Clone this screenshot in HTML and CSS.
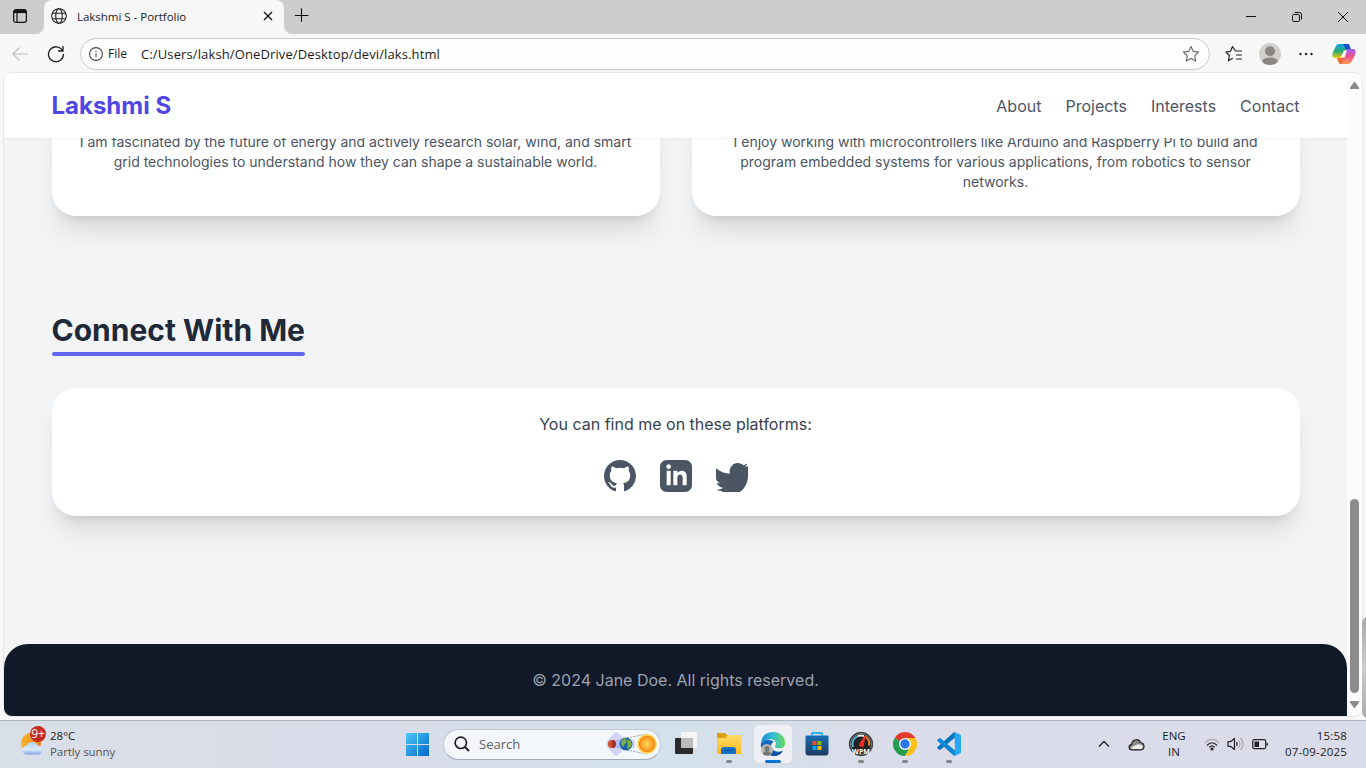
FILE: index.html
```html
<!DOCTYPE html>
<html lang="en">
<head>
<meta charset="utf-8">
<title>Lakshmi S - Portfolio</title>
<link rel="stylesheet" href="styles.css">
</head>
<body>
<div class="screen">
  <div class="tabbar">
    <div class="tab-menu"><svg width="16" height="16" viewBox="0 0 16 16" fill="none" stroke="#111" stroke-width="1.2"><rect x="1.6" y="1.6" width="12.8" height="12.8" rx="2.4"/><path d="M2 3.6h12" stroke-width="3"/><path d="M5 5v9"/></svg></div>
    <div class="tab">
      <svg class="globe" width="16" height="16" viewBox="0 0 16 16" fill="none" stroke="#222" stroke-width="1.1"><circle cx="8" cy="8" r="7.3"/><ellipse cx="8" cy="8" rx="3.3" ry="7.3"/><path d="M1.3 5.3h13.4M1.3 10.7h13.4"/></svg>
      <span class="tab-title">Lakshmi S - Portfolio</span>
      <svg class="tab-close" width="10" height="10" viewBox="0 0 10 10" stroke="#111" stroke-width="1.3"><path d="M1 1l8 8M9 1L1 9"/></svg>
    </div>
    <div class="strip"><svg class="plus" width="14" height="14" viewBox="0 0 14 14" stroke="#111" stroke-width="1.1"><path d="M6.500 .2v13.600M-.2 7.500h13.600"/></svg>
    <div class="win">
      <svg width="46" height="34" viewBox="0 0 46 34" fill="none" stroke="#111"><path d="M18 16.5h10"/></svg>
      <svg width="46" height="34" viewBox="0 0 46 34" fill="none" stroke="#111"><rect x="18.5" y="14.5" width="7" height="7" rx="1.3"/><path d="M20.5 12.5h5a2 2 0 0 1 2 2v5"/></svg>
      <svg width="46" height="34" viewBox="0 0 46 34" fill="none" stroke="#111"><path d="M18 12l10 10M28 12l-10 10"/></svg>
    </div></div>
  </div>
  <div class="toolbar">
    <svg class="back" width="16" height="14" viewBox="0 0 16 14" fill="none" stroke="#bcbcbc" stroke-width="1.1"><path d="M16 7H1M7.5.5L1 7l6.500 6.500"/></svg>
    <svg class="reload" width="18" height="18" viewBox="0 0 18 18" fill="none" stroke="#222" stroke-width="1.3"><path d="M15.500 5.500A7.500 7.500 0 1 0 16.500 9M16 1v5h-5"/></svg>
    <div class="address">
      <svg width="14" height="14" viewBox="0 0 14 14" fill="none" stroke="#444" stroke-width="1.1"><circle cx="7" cy="7" r="6.400"/><path d="M7 6.200V10M7 3.800V5"/></svg>
      <span class="scheme">File</span>
      <span class="url">C:/Users/laksh/OneDrive/Desktop/devi/laks.html</span>
      <svg class="star" width="18" height="18" viewBox="0 0 18 18" fill="none" stroke="#666" stroke-width="1.100" stroke-linejoin="round"><path d="M9 1.500l2.300 4.900 5.300.7-3.900 3.700 1 5.300L9 13.500l-4.700 2.600 1-5.300-3.900-3.700 5.300-.7z"/></svg>
    </div>
    <div class="tools">
      <svg width="18" height="18" viewBox="0 0 18 18" fill="none" stroke="#222" stroke-width="1.200" stroke-linejoin="round"><path d="M10.500 6L7.500 1.500 5.500 6.300l-4.700.7 3.600 3.500-1 5.300 4.400-2.500M10.500 6h6.500M11 10h6M11 14h6"/></svg>
      <svg width="22" height="22" viewBox="0 0 22 22"><defs><clipPath id="avatar"><circle cx="11" cy="11" r="11"/></clipPath></defs><circle cx="11" cy="11" r="11" fill="#d2d0cd"/><g fill="#8b8784" clip-path="url(#avatar)"><circle cx="11" cy="8.300" r="5"/><ellipse cx="11" cy="19" rx="8" ry="4.500"/></g></svg>
      <svg width="14" height="4" viewBox="0 0 14 4" fill="#222"><circle cx="1.500" cy="2" r="1.200"/><circle cx="7" cy="2" r="1.200"/><circle cx="12.500" cy="2" r="1.200"/></svg>
      <svg width="24" height="22" viewBox="0 0 24 22"><defs><linearGradient id="cpa" x2="0" y2="1"><stop stop-color="#169fe8"/><stop offset=".5" stop-color="#25ad78"/><stop offset="1" stop-color="#f4c80c"/></linearGradient><linearGradient id="cpb" x2="0" y2="1"><stop stop-color="#a05bf0"/><stop offset=".5" stop-color="#f15490"/><stop offset="1" stop-color="#fd9e55"/></linearGradient></defs><path d="M7 1h8c2 0 2.500 1 3 3l1 3h-5L9 15H3C0 15 0 12 1 9l3-6c.5-1.300 1.500-2 3-2z" fill="url(#cpa)"/><path d="M11 1h4c2 0 2.500 1 3 3l1 3h-4c-2 0-2-4-4-6z" fill="#174fc8"/><path d="M17 6h4c3 0 3 3 2 6l-3 6c-1 2-2 3-4 3H9c-2 0-2.500-2-3-4l-1-2h5l4-7c.6-1.300 1.600-2 3-2z" fill="url(#cpb)"/><path d="M5 15h5l3-5 1 0-3 8c-.5 2-1 3-2 3-2 0-2.500-2-3-4z" fill="#ef6941"/><path d="M12 7.500h3l-2.500 7H9z" fill="#fff"/></svg>
    </div>
  </div>
  <div class="frame">
    <div class="page">
      <nav class="nav"><strong class="brand">Lakshmi S</strong><div class="links"><span>About</span><span>Projects</span><span>Interests</span><span>Contact</span></div></nav>
      <main class="main">
        <div class="interests">
          <article class="card interest">I am fascinated by the future of energy and actively research solar, wind, and smart<br>grid technologies to understand how they can shape a sustainable world.</article>
          <article class="card interest">I enjoy working with microcontrollers like Arduino and Raspberry Pi to build and<br>program embedded systems for various applications, from robotics to sensor<br>networks.</article>
        </div>
        <h2 class="heading">Connect With Me</h2>
        <section class="card connect">
          <p class="lead">You can find me on these platforms:</p>
          <div class="social">
            <svg width="32" height="32" viewBox="0 0 24 24"><path d="M12 0C5.370 0 0 5.370 0 12c0 5.300 3.440 9.800 8.210 11.390.6.110.82-.26.82-.58v-2.230c-3.340.73-4.040-1.420-4.040-1.420-.55-1.390-1.330-1.760-1.330-1.760-1.090-.74.08-.73.08-.73 1.200.08 1.840 1.240 1.840 1.240 1.070 1.830 2.800 1.300 3.490 1 .11-.78.42-1.310.76-1.610-2.670-.3-5.470-1.330-5.470-5.930 0-1.310.47-2.380 1.240-3.220-.12-.3-.54-1.520.12-3.180 0 0 1.010-.32 3.300 1.230a11.500 11.500 0 0 1 6 0c2.290-1.550 3.300-1.230 3.300-1.230.66 1.660.24 2.880.12 3.180.77.84 1.240 1.910 1.240 3.220 0 4.610-2.810 5.620-5.480 5.920.43.37.82 1.100.82 2.220v3.290c0 .32.21.7.82.58A12 12 0 0 0 24 12C24 5.370 18.630 0 12 0z"/></svg>
            <svg width="32" height="32" viewBox="0 0 24 24"><path d="M19 0h-14c-2.761 0-5 2.239-5 5v14c0 2.761 2.239 5 5 5h14c2.762 0 5-2.239 5-5v-14c0-2.761-2.238-5-5-5zm-11 19h-3v-11h3v11zm-1.500-12.268c-.966 0-1.750-.79-1.750-1.764s.784-1.764 1.750-1.764 1.750.79 1.750 1.764-.783 1.764-1.750 1.764zm13.500 12.268h-3v-5.604c0-3.368-4-3.113-4 0v5.604h-3v-11h3v1.765c1.396-2.586 7-2.777 7 2.476v6.759z"/></svg>
            <svg width="32" height="32" viewBox="0 0 24 24"><path d="M0 6.200c3 2.700 6.600 4 10.400 4.100C9.500 5.800 12.500 2.200 16.300 2.200c1.900 0 3.200.7 4.200 1.700 1.100-.2 2.100-.6 3.100-1.200-.4 1-1.100 1.900-2 2.500l2.400-.5v8.100C23.500 18 21.500 21.500 18 24H4.300l.5-.7c-1.700.1-3.300-.2-4.800-.9 2 .1 3.800-.5 5.200-1.600-2.200-.2-3.900-1.500-4.700-3.500.8.2 1.700.1 2.500-.1C1.300 16.700 0 15.200 0 13.500z"/></svg>
          </div>
        </section>
      </main>
      <footer class="footer">© 2024 Jane Doe. All rights reserved.</footer>
    </div>
    <div class="scroll"><svg width="9" height="7" viewBox="0 0 9 7"><path d="M4 0h1l4 5.500V7H0V5.500z"/></svg><div class="thumb"></div><svg width="9" height="7" viewBox="0 0 9 7"><path d="M0 0h9v1.500L5 7H4L0 1.500z"/></svg></div>
  </div>
  <div class="edge-widget"></div>
  <div class="taskbar">
    <div class="weather">
      <svg width="26" height="32" viewBox="0 0 26 32"><defs><linearGradient id="sun"><stop stop-color="#f9b42d"/><stop offset="1" stop-color="#ef8418"/></linearGradient><linearGradient id="cloud" x2="0" y2="1"><stop stop-color="#b5d2fa"/><stop offset=".6" stop-color="#dceafa"/><stop offset="1" stop-color="#7ca5ec"/></linearGradient></defs><circle cx="11" cy="18" r="10" fill="url(#sun)"/><path d="M7 29.500a4.500 4.500 0 0 1-.3-9c1.300-4 8.300-5 11 0 6-.5 6.800 9 0 9z" fill="url(#cloud)"/><circle cx="18" cy="9" r="8" fill="#c42b1c"/><text class="badge" x="18" y="13.200" text-anchor="middle">9+</text></svg>
      <div class="weather-text"><span class="temp">28°C</span><span class="sky">Partly sunny</span></div>
    </div>
    <div class="apps">
      <svg class="start" width="23" height="23" viewBox="0 0 23 23"><defs><linearGradient id="win" x2="1" y2="1"><stop stop-color="#50c8f7"/><stop offset="1" stop-color="#0067cc"/></linearGradient></defs><path fill="url(#win)" d="M0 0h11v11H0zM12 0h11v11H12zM0 12h11v11H0zM12 12h11v11H12z"/></svg>
      <div class="search">
        <svg width="16" height="16" viewBox="0 0 16 16" fill="none" stroke="#222"><circle cx="6.800" cy="6.800" r="5.700" stroke-width="1.700"/><path d="M11 11l4 4" stroke-width="2.200"/></svg>
        <span>Search</span>
        <svg class="space" width="54" height="28" viewBox="0 0 54 28"><defs><radialGradient id="sol"><stop stop-color="#ffd25a"/><stop offset=".6" stop-color="#fda52b"/><stop offset=".75" stop-color="#f87e16"/><stop offset=".85" stop-color="#ffcf3a"/><stop offset="1" stop-color="#ffe88a"/></radialGradient></defs><path d="M1 14q0-3 3-5l5-6q2-2 4 0l7 6 10 1v8l-10 1-7 6q-2 2-4 0l-5-6q-3-2-3-5z" fill="#d3d5f4"/><path d="M7 11l15-3v12L7 17z" fill="#a4aff0" opacity=".7"/><path d="M22 8l20-4M22 20l20 4" stroke="#9ba5b5" stroke-dasharray="2 1"/><circle cx="7" cy="14" r="4" fill="#d54d2b"/><path d="M7 10a4 4 0 0 1 0 8z" fill="#a2342a"/><circle cx="21" cy="14" r="6.500" fill="#1d60ac"/><path d="M16 11l4-3 2 3-2 3-2 3-2-3zM23 9l3 2 1 4-3 4-2-2 1-3-1-2z" fill="#7bae43"/><circle cx="42" cy="14" r="10" fill="url(#sol)"/></svg>
      </div>
      <div class="app"><svg width="26" height="26" viewBox="0 0 26 26"><rect x="2" y="7" width="18" height="16" rx="1" fill="#2b2b2b"/><rect x="8" y="1" width="16" height="16" rx="1" fill="#f5f5f5"/><path d="M8 7h12v10H8z" fill="#bcbcbc"/></svg></div>
      <div class="app run"><svg width="26" height="26" viewBox="0 0 26 26"><defs><linearGradient id="folder" x2="0" y2="1"><stop stop-color="#ffdb68"/><stop offset="1" stop-color="#fbb91d"/></linearGradient></defs><path d="M1 3c0-1 .5-1 1-1h7l2 2h13c1 0 1 1 1 1v8H1z" fill="#dc9d10"/><path d="M1 7h8l3-3h12l1 1v17c0 1 0 1-1 1H1z" fill="url(#folder)"/><path d="M5 23v-4q0-3 3-3h9q3 0 3 3v4z" fill="#1473c8"/><path d="M8 19.500h9" stroke="#0a569e" stroke-width="1.500"/></svg></div>
      <div class="app active"><svg width="26" height="26" viewBox="0 0 26 26"><defs><linearGradient id="edge"><stop stop-color="#168dd8"/><stop offset=".5" stop-color="#32bed5"/><stop offset="1" stop-color="#68d855"/></linearGradient></defs><path d="M1 12C2 4 7 1 13 1c8 0 13 6 12 12-.6 4-4 5-8 4-3-.7-2-2-1-4 1-5-9-7-15-1z" fill="url(#edge)"/><path d="M1 12c4-4 9-4 13-1-4 1-4 7 1 9 4 1.500 7 0 8-.500C20 25 14 26 9 24 3 22 0 17 1 12z" fill="#136cb9"/><path d="M11 12c-2 6 4 13 12 8-5 8-15 5-16-1-.5-3 1-6 4-7z" fill="#1551a0"/><circle cx="7" cy="19" r="6" fill="#b9b8b6"/><circle cx="7" cy="17.500" r="2.600" fill="#777"/><path d="M3 23c0-4 8-4 8 0-2 2-6 2-8 0z" fill="#777"/></svg></div>
      <div class="app"><svg width="26" height="26" viewBox="0 0 26 26"><defs><linearGradient id="store" x2="0" y2="1"><stop stop-color="#176db5"/><stop offset="1" stop-color="#20395f"/></linearGradient></defs><path d="M8 6V3q0-1 1-1h8q1 0 1 1v3" fill="none" stroke="#29b1ed" stroke-width="1.800"/><path d="M1.500 5.500q0-1 1-1h21q1 0 1 1v16q0 3-3 3h-17q-3 0-3-3z" fill="url(#store)"/><path d="M8 5V3q0-1 1-1h8q1 0 1 1v2" fill="none" stroke="#29b1ed" stroke-width="1.800"/><path d="M8.500 10h4v4h-4z" fill="#f25022"/><path d="M13.500 10h4v4h-4z" fill="#7fba00"/><path d="M8.500 15h4v4h-4z" fill="#00a4ef"/><path d="M13.500 15h4v4h-4z" fill="#ffb900"/></svg></div>
      <div class="app run"><svg width="26" height="26" viewBox="0 0 26 26"><circle cx="13" cy="13" r="11.700" fill="#222" stroke="#3b3b3b"/><circle cx="13" cy="13" r="10.500" fill="none" stroke="#aaa" stroke-width=".7"/><path d="M5 16A8.500 8.500 0 0 1 10 5" fill="none" stroke="#51b2dc" stroke-width="2"/><path d="M10 5a8.500 8.500 0 0 1 6 0" fill="none" stroke="#eee" stroke-width="2"/><path d="M17 5.500a8.500 8.500 0 0 1 4 9" fill="none" stroke="#f18624" stroke-width="2"/><path d="M17 5l-2 11-4-2z" fill="#ef2c23" stroke="#ef2c23"/><text class="wpm" x="13" y="22.500" text-anchor="middle">WPM</text></svg></div>
      <div class="app run"><svg width="24" height="24" viewBox="0 0 24 24"><path d="M12 12L1.600 6A12 12 0 0 1 22.400 6z" fill="#e33b2e"/><path d="M12 12L1.600 6A12 12 0 0 0 12 24l5-9z" fill="#269d4d"/><path d="M12 6h10.400A12 12 0 0 1 12 24l5.200-9z" fill="#fbc116"/><circle cx="12" cy="12" r="6" fill="#fff"/><circle cx="12" cy="12" r="4.700" fill="#2876e8"/></svg></div>
      <div class="app run"><svg width="24" height="24" viewBox="0 0 24 24"><path d="M18 5.500L3.500 17.800l-1 .2L0 16l.5-1L16.500.5 18 0z" fill="#0875bd"/><path d="M18 18.500L3.500 6.200l-1-.2L0 8l.5 1 16 14.500L18 24z" fill="#1088d3"/><path d="M17.500 0l5.500 2.500 1 1v17l-1 1L17.500 24l-1-.5 1.500-1z" fill="#29a7f0"/></svg></div>
    </div>
    <div class="tray">
      <svg class="chev" width="12" height="8" viewBox="0 0 12 8" fill="none" stroke="#222" stroke-width="1.300"><path d="M1 6.500l5-5 5 5"/></svg>
      <svg class="onedrive" width="17" height="13" viewBox="0 0 17 13"><path d="M4 11.800C.5 11.800 0 7.300 3.500 6.300 4.500.5 11 .5 12.300 4.500 17.300 5 17 11.800 13 11.800z" fill="#888" stroke="#222" stroke-width="1.200"/><path d="M3 10.800C3.500 8 8 7.500 9.500 6.500c2-.8 5 0 5.500 3l-1.500 1.600H4z" fill="#eee"/></svg>
      <div class="lang"><span>ENG</span><span>IN</span></div>
      <svg class="wifi" width="16" height="13" viewBox="0 0 16 13" fill="none" stroke="#222" stroke-width="1.200"><path d="M1 5.200c4-5 10-5 14 0" stroke="#aaa"/><path d="M3 7.500c3-3.700 7-3.700 10 0M5.300 9.400c1.700-2 3.700-2 5.400 0"/><circle cx="8" cy="11" r="1" fill="#222"/></svg>
      <svg class="sound" width="17" height="14" viewBox="0 0 17 14" fill="none" stroke="#222" stroke-width="1.200"><path d="M1 4.700h2.500L7.500 1.500v11l-4-3.200H1z" stroke-linejoin="round"/><path d="M9.500 5q1.500 2 0 4"/><path d="M11.500 3q3 4 0 8M13.500 1q5 6 0 12" stroke="#aaa"/></svg>
      <svg class="battery" width="17" height="11" viewBox="0 0 17 11"><rect x=".7" y=".7" width="13" height="9" rx="1.800" fill="none" stroke="#222" stroke-width="1.200"/><path d="M2.500 2.500H7v5.500H2.500zM14.500 3.500l1.500 1v1.500l-1.500 1z" fill="#222"/></svg>
      <div class="clock"><span>15:58</span><span>07-09-2025</span></div>
    </div>
  </div>
</div>
</body>
</html>
```
FILE: styles.css
```css
* { box-sizing: border-box; }
body { margin: 0; overflow: hidden; }
svg { display: block; flex: none; }
.screen { position: relative; display: flex; flex-direction: column; width: 1366px; height: 768px; overflow: hidden; background: #f7f7f7; font-family: "Open Sans", "Noto Sans", sans-serif; color: #1b1b1b; white-space: nowrap; }

.tabbar { display: flex; height: 34px; background: #f7f7f7; }
.tab-menu { width: 44px; padding: 8px 0 0 12px; border-bottom-right-radius: 8px; background: #cdcdcd; }
.tab { display: flex; align-items: center; width: 240px; padding: 0 11px 2px 7px; border-radius: 8px 8px 0 0; background: #f7f7f7; box-shadow: 0 -8px 0 #cdcdcd; }
.tab { box-shadow: -4px -8px 0 4px #cdcdcd, 4px -8px 0 4px #cdcdcd; clip-path: inset(0); }
.tabbar { background: linear-gradient(#cdcdcd 10px, #f7f7f7 10px); }
.tab-title { margin-left: 10px; font-size: 11.5px; letter-spacing: -.02px; }
.tab-close { margin-left: auto; }
.strip { display: flex; flex: 1; border-bottom-left-radius: 8px; background: #cdcdcd; }
.plus { margin: 8px 0 0 11px; overflow: visible; }
.win { display: flex; margin-left: auto; }

.toolbar { display: flex; align-items: center; height: 39px; padding: 0 10px 0 12px; }
.reload { margin-left: 19px; }
.address { display: flex; align-items: center; width: 1130px; height: 32px; margin: 0 0 0 15px; padding: 0 9px 0 8px; border: 1px solid #cbcbcb; border-radius: 16px; background: #fdfdfd; }
.scheme { width: 33px; margin-left: 5px; font-size: 12px; letter-spacing: 0; }
.url { font-size: 13px; letter-spacing: .12px; }
.star { margin-left: auto; }
.tools { display: flex; flex: 1; align-items: center; justify-content: space-between; padding-left: 15px; }
.tools svg:nth-child(2) { margin-left: -3px; }

.frame { display: flex; width: 1358px; height: 643px; margin-left: 4px; border-radius: 8px; overflow: hidden; background: #fff; box-shadow: 0 0 0 1px #e7e7e7; padding-top: 1px; flex: none; }
.page { display: flex; flex-direction: column; width: 1343px; height: 642px; background: #f3f4f6; font-family: Inter, sans-serif; overflow: hidden; }
.nav { position: relative; z-index: 1; display: flex; align-items: center; justify-content: space-between; height: 64px; flex: none; padding: 0 47.500px; background: #fff; box-shadow: 0 1px 2px rgba(0,0,0,.06); }
.brand { color: #4f46e5; font-size: 24px; line-height: 32px; font-weight: 700; }
.links { display: flex; gap: 24px; font-size: 16px; color: #4b5563; }
.main { flex: 1; padding: 0 47px 0 48px; }
.interests { display: grid; grid-template-columns: 1fr 1fr; gap: 32px; margin-top: -30px; }
.card { background: #fff; border-radius: 24px; text-align: center; box-shadow: 0 20px 25px -5px rgba(0,0,0,.1), 0 8px 10px -6px rgba(0,0,0,.1); }
.interest { height: 108px; padding: 24px 24.500px 24px 23.500px; font-size: 14px; line-height: 20px; color: #4b5563; }
.heading { width: fit-content; margin: 96px 0 0; padding-bottom: 4px; font-size: 30px; line-height: 36px; font-weight: 700; color: #1f2937; text-indent: -.5px; }
.heading::after { content: ""; display: block; height: 4px; margin: 4px 0 -4px; border-radius: 2px; background: #6366f1; }
.connect { height: 128px; margin-top: 32px; padding: 24px; }
.lead { margin: 0 0 24px; padding-right: 1px; font-size: 16px; line-height: 24px; color: #374151; }
.social { display: flex; justify-content: center; gap: 24px; fill: #4b5563; }
.footer { height: 72px; flex: none; padding: 24px; border-radius: 24px 24px 0 0; background: #111827; color: #9ca3af; font-size: 16px; line-height: 24px; text-align: center; }
.scroll { display: flex; flex-direction: column; align-items: center; width: 15px; padding: 8px 0; background: #fcfcfc; fill: #8b8b8b; }
.thumb { width: 9px; height: 194px; margin: auto 0 8px; border-radius: 5px; background: #8b8b8b; }
.edge-widget { position: absolute; left: 1362px; top: 617px; width: 12px; height: 101px; border-radius: 6px; background: linear-gradient(#aaa, #ccc 50%, #aaa); }

.taskbar { display: grid; grid-template-columns: 395px 576px 1fr; height: 48px; margin-top: 4px; flex: none; border-top: 1px solid #b0b4bd; background: linear-gradient(90deg, #d9dfe9, #d9dce8 28%, #d3e1ea 48%, #dadde9 64%, #dadde9); }
.weather { display: flex; padding: 4px 0 0 20px; }
.badge { font: 12px "Open Sans", sans-serif; fill: #fff; }
.weather-text { display: flex; flex-direction: column; margin-left: 4px; padding-top: 3px; font-size: 11.5px; line-height: 16px; }
.sky { color: #555; letter-spacing: -.08px; }
.apps { display: flex; align-items: center; padding-bottom: 1px; }
.start { margin-left: 11px; }
.search { display: flex; align-items: center; width: 218px; height: 31px; margin: 0 3px 0 14px; padding: 0 1px 0 10px; border: 1px solid #c0c9d3; border-bottom-color: #9eaab5; border-radius: 16px; background: #f3f6fa; font-size: 13px; color: #5d6066; }
.search span { margin-left: 9px; }
.space { margin-left: auto; }
.app { position: relative; display: flex; align-items: center; justify-content: center; width: 38px; height: 38px; margin: 0 3px; border-radius: 4px; }
.active { background: #eef0f6; box-shadow: 0 0 1px #b7bac2; }
.run::after, .active::after { content: ""; position: absolute; bottom: 0; width: 6px; height: 3px; border-radius: 2px; background: #85878c; }
.active::after { width: 16px; background: #0874ce; }
.wpm { font: bold 7px "Open Sans", sans-serif; fill: #fff; }
.tray { display: flex; align-items: center; padding: 0 19px 1px 127px; font-size: 11.5px; line-height: 16px; }
.onedrive { margin-left: 18px; }
.lang { display: flex; flex-direction: column; align-items: center; width: 30px; margin-left: 14px; }
.wifi { margin-left: 15px; }
.sound { margin-left: 7px; }
.battery { margin-left: 8px; }
.clock { display: flex; flex-direction: column; align-items: flex-end; margin-left: auto; letter-spacing: .2px; }
```
